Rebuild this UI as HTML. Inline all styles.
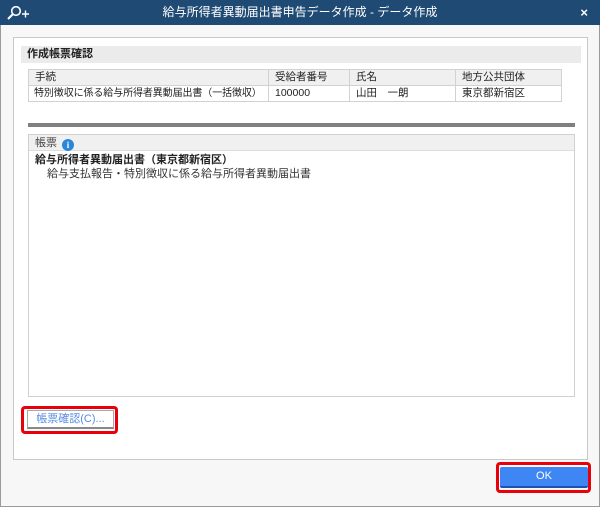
<!DOCTYPE html>
<html><head><meta charset="utf-8"><style>
*{margin:0;padding:0;box-sizing:border-box}
body{width:600px;height:507px;overflow:hidden;font-family:"Liberation Sans","Noto Sans CJK JP",sans-serif;font-size:11px;color:#222;background:#fff;position:relative}
.win{position:absolute;left:0;top:0;width:600px;height:507px;background:#f7f7f7;border:1px solid #9a9a9a}
.title{position:absolute;left:0;top:0;width:600px;height:25px;background:#1e4a74;color:#fff;font-size:12px;text-align:center;line-height:25px}
.x{position:absolute;right:12px;top:0;font-weight:bold;font-size:13px}
.panel{position:absolute;left:13px;top:37px;width:575px;height:423px;background:#fff;border:1px solid #c8c8c8}
.a{position:absolute}
.sec{left:21px;top:46px;width:560px;height:17px;background:#ebebeb;font-weight:bold;line-height:17px;padding-left:6px}
table{position:absolute;left:28px;top:69px;border-collapse:collapse;width:533px;table-layout:fixed;font-size:10.5px}
td{border:1px solid #d2d2d2;height:16px;padding-left:6px;line-height:15px;white-space:nowrap;overflow:hidden}
td.f{font-size:10px;padding-left:5px;letter-spacing:-0.1px}
tr:first-child td{background:#f0f0f0}
.bar{left:28px;top:123px;width:547px;height:4px;background:#808080}
.list{left:28px;top:134px;width:547px;height:263px;border:1px solid #d0d0d0;background:#fff}
.lh{height:16px;background:#f0f0f0;border-bottom:1px solid #ddd;line-height:16px;padding-left:6px;color:#444}
.info{display:inline-block;width:12px;height:12px;border-radius:50%;background:#2a87d8;color:#fff;font-size:9px;line-height:12px;text-align:center;font-weight:bold;margin-left:5px;vertical-align:-2px;font-family:"Liberation Serif",serif}
.red{border:3px solid #e8000b;border-radius:4px}
.b1{left:27px;top:410px;width:87px;height:19px;background:#fff;border:1px solid #aaa;border-bottom:2px solid #888;color:#5a8ee0;text-align:center;line-height:16px}
.ok{left:500px;top:467px;width:88px;height:21px;background:#3d86f3;border-bottom:2px solid #1e50b0;border-radius:2px;color:#fff;text-align:center;line-height:19px}
</style></head><body>
<div class="win"></div>
<div class="title"><svg class="a" style="left:6px;top:5px" width="26" height="16" viewBox="0 0 26 16"><circle cx="10" cy="6" r="4.3" fill="none" stroke="#fff" stroke-width="1.6"/><path d="M7 9 L2 14" stroke="#fff" stroke-width="2"/><path d="M16 9h7M19.5 5.5v7" stroke="#fff" stroke-width="1.4"/></svg>給与所得者異動届出書申告データ作成 - データ作成<span class="x">×</span></div>
<div class="panel"></div>
<div class="a sec">作成帳票確認</div>
<table><colgroup><col style="width:240px"><col style="width:81px"><col style="width:106px"><col style="width:106px"></colgroup><tr><td>手続</td><td>受給者番号</td><td>氏名</td><td>地方公共団体</td></tr>
<tr><td class="f">特別徴収に係る給与所得者異動届出書（一括徴収）</td><td>100000</td><td>山田　一朗</td><td>東京都新宿区</td></tr></table>
<div class="a bar"></div>
<div class="a list"><div class="lh">帳票<span class="info">i</span></div>
<div style="padding:2px 0 0 6px;font-weight:bold;line-height:14px">給与所得者異動届出書（東京都新宿区）</div>
<div style="padding-left:18px;line-height:14px;color:#333">給与支払報告・特別徴収に係る給与所得者異動届出書</div></div>
<div class="a red" style="left:21px;top:406px;width:97px;height:28px"></div>
<div class="a b1">帳票確認(C)...</div>
<div class="a red" style="left:496px;top:462px;width:95px;height:31px"></div>
<div class="a ok">OK</div>
</body></html>
